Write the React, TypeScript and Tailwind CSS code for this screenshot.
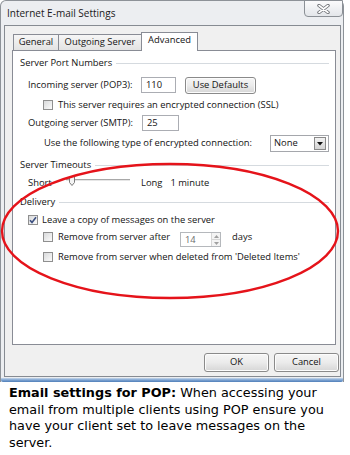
import React from "react";

const Checkbox = ({ checked = false }: { checked?: boolean }) => (
    <div className="w-[10px] h-[10px] shrink-0 border border-[#8f8f8f] bg-linear-to-br from-[#d9dadb] to-[#fbfbfb] flex items-center justify-center">
        {checked && (
            <svg width="8" height="8" viewBox="0 0 8 8">
                <path d="M1 4.2 L3 6.4 L7 1.2" fill="none" stroke="#3b4f80" strokeWidth="1.6" />
            </svg>
        )}
    </div>
);

const GroupHeader = ({ label }: { label: string }) => (
    <div className="flex items-center h-[12px] gap-[4px]">
        <span className="leading-[12px] whitespace-nowrap">{label}</span>
        <div className="flex-1 h-px bg-[#d5dadf]" />
    </div>
);

const WinButton = ({ label, className = "" }: { label: string; className?: string }) => (
    <div
        className={
            "flex items-center justify-center border border-[#8a8a8a] rounded-[3px] bg-linear-to-b from-[#f6f6f6] via-[#ebebeb] to-[#d6d6d6] shadow-[inset_0_0_0_1px_#fcfcfc] " +
            className
        }
    >
        {label}
    </div>
);

export default function App() {
    const tabs = [
        { name: "General", w: "w-[45px]", active: false },
        { name: "Outgoing Server", w: "w-[83px]", active: false },
        { name: "Advanced", w: "w-[57px]", active: true },
    ];

    return (
        <div className="relative w-[350px] h-[455px] bg-white overflow-hidden font-['Open_Sans',sans-serif] text-[9.4px] text-[#141414]">
            {/* Window */}
            <div className="w-[344px] h-[382px] flex flex-col border-x border-t border-[#8d9298] rounded-t-[6px] bg-[#eceef1]">
                {/* Title bar */}
                <div className="h-[24px] flex items-start justify-between pl-[6px]">
                    <span className="text-[10px] leading-[12px] mt-[6px] text-[#1a1a1a]">Internet E-mail Settings</span>
                    <div className="w-[39px] h-[17px] -mt-px border border-[#8b9096] rounded-b-[4px] bg-linear-to-b from-[#fbfbfc] to-[#e3e6ea] flex items-center justify-center">
                        <svg width="13" height="10" viewBox="0 0 13 10">
                            <path d="M2 1.5 L11 8.5 M11 1.5 L2 8.5" stroke="#6b6e73" strokeWidth="3.4" strokeLinecap="round" />
                            <path d="M2 1.5 L11 8.5 M11 1.5 L2 8.5" stroke="#ffffff" strokeWidth="1.6" strokeLinecap="round" />
                        </svg>
                    </div>
                </div>

                {/* Client area */}
                <div className="flex-1 ml-[3px] mr-[2px] border border-[#868b92] bg-[#f0f0f0] flex flex-col pt-[6px] pl-[7px] pr-[4px]">
                    {/* Tabs */}
                    <div className="h-[18px] flex items-end pl-px">
                        {tabs.map((t) => (
                            <div
                                key={t.name}
                                className={
                                    t.active
                                        ? "w-[57px] h-[19px] -mb-px relative z-10 bg-white border-x border-t border-[#898c95] flex items-center justify-center pb-[3px]"
                                        : t.w +
                                          " h-[16px] border-t border-l border-[#898c95] bg-linear-to-b from-[#f6f6f6] to-[#e3e3e3] flex items-center justify-center"
                                }
                            >
                                {t.name}
                            </div>
                        ))}
                    </div>

                    {/* Panel */}
                    <div className="h-[295px] bg-white border border-[#898c95] pt-[6px] pl-[7px] pr-[6px] flex flex-col">
                        <GroupHeader label="Server Port Numbers" />

                        <div className="flex items-start h-[17px] mt-[8px] ml-[8px]">
                            <span className="w-[113px] leading-[16px]">Incoming server (POP3):</span>
                            <div className="w-[35px] h-[16px] border border-[#abadb3] bg-white pl-[4px] leading-[14px]">110</div>
                            <WinButton label="Use Defaults" className="ml-[9px] w-[71px] h-[17px]" />
                        </div>

                        <div className="flex items-center h-[14px] mt-[4px] ml-[23px] gap-[5px]">
                            <Checkbox />
                            <span>This server requires an encrypted connection (SSL)</span>
                        </div>

                        <div className="flex items-start h-[16px] mt-[3px] ml-[8px]">
                            <span className="w-[114px] leading-[16px]">Outgoing server (SMTP):</span>
                            <div className="w-[37px] h-[16px] border border-[#abadb3] bg-white pl-[4px] leading-[14px]">25</div>
                        </div>

                        <div className="flex items-center h-[17px] mt-[4px] ml-[24px]">
                            <span>Use the following type of encrypted connection:</span>
                            <div className="ml-auto w-[59px] h-[17px] border border-[#a5a7ac] bg-white flex items-center pl-[3px] pr-[2px]">
                                <span className="flex-1">None</span>
                                <div className="w-[12px] h-[13px] border border-[#8a8a8a] bg-linear-to-b from-[#f2f2f2] to-[#d4d4d4] flex items-center justify-center">
                                    <svg width="6" height="4" viewBox="0 0 6 4">
                                        <path d="M0 0 H6 L3 3.5 Z" fill="#111" />
                                    </svg>
                                </div>
                            </div>
                        </div>

                        <div className="mt-[7px]">
                            <GroupHeader label="Server Timeouts" />
                        </div>

                        <div className="flex items-center h-[12px] mt-[6px] ml-[8px]">
                            <span className="w-[36px]">Short</span>
                            <div className="relative w-[66px] h-[12px]">
                                <div className="absolute left-[2px] right-0 top-[2px] h-[2px] border-t border-[#a8a8a8] bg-[#e6e6e6]" />
                                <svg className="absolute left-[5px] top-[-1px]" width="6" height="10" viewBox="0 0 6 10">
                                    <path d="M0.5 0.5 H5.5 V6.5 L3 9.5 L0.5 6.5 Z" fill="#f4f4f4" stroke="#7a7a7a" strokeWidth="1" />
                                </svg>
                            </div>
                            <span className="ml-[11px]">Long</span>
                            <span className="ml-[8px]">1 minute</span>
                        </div>

                        <div className="mt-[7px]">
                            <GroupHeader label="Delivery" />
                        </div>

                        <div className="flex items-center h-[12px] mt-[6px] ml-[8px] gap-[4px]">
                            <Checkbox checked />
                            <span>Leave a copy of messages on the server</span>
                        </div>

                        <div className="flex items-start h-[16px] mt-[5px] ml-[23px]">
                            <div className="mt-px">
                                <Checkbox />
                            </div>
                            <span className="ml-[5px] w-[122px] leading-[12px]">Remove from server after</span>
                            <div className="mt-px w-[41px] h-[15px] border border-[#b5b8bc] bg-white flex">
                                <span className="flex-1 pl-[4px] leading-[13px] text-[#6d6d6d]">14</span>
                                <div className="w-[9px] flex flex-col border-l border-[#d6d6d6]">
                                    <div className="flex-1 flex items-center justify-center border-b border-[#d6d6d6] bg-[#f4f4f4]">
                                        <svg width="5" height="3" viewBox="0 0 5 3">
                                            <path d="M0 3 L2.5 0 L5 3 Z" fill="#a0a0a0" />
                                        </svg>
                                    </div>
                                    <div className="flex-1 flex items-center justify-center bg-[#f4f4f4]">
                                        <svg width="5" height="3" viewBox="0 0 5 3">
                                            <path d="M0 0 L5 0 L2.5 3 Z" fill="#a0a0a0" />
                                        </svg>
                                    </div>
                                </div>
                            </div>
                            <span className="ml-[11px] leading-[12px]">days</span>
                        </div>

                        <div className="flex items-start h-[12px] mt-[4px] ml-[23px]">
                            <div className="mt-px">
                                <Checkbox />
                            </div>
                            <span className="ml-[5px] leading-[12px]">Remove from server when deleted from 'Deleted Items'</span>
                        </div>
                    </div>

                    {/* Buttons */}
                    <div className="flex justify-end gap-[5px] mt-[8px] -mr-[3px]">
                        <WinButton label="OK" className="w-[65px] h-[19px]" />
                        <WinButton label="Cancel" className="w-[65px] h-[19px]" />
                    </div>
                </div>

                {/* Bottom frame edge */}
                <div className="h-[4px] mt-px rounded-b-[2px] bg-linear-to-b from-[#c8d8ea] via-[#7ea4d2] to-[#4f7fb8]" />
            </div>

            {/* Caption */}
            <p className="mt-[3px] pl-[9px] w-[345px] font-['DejaVu_Sans',sans-serif] text-[12.8px] leading-[16.5px] text-black">
                <span className="font-bold">Email settings for POP:</span> When accessing your email from multiple clients using POP ensure you have your client set to leave messages on the server.
            </p>

            {/* Red highlight */}
            <svg className="absolute left-0 top-0 pointer-events-none" width="350" height="455" viewBox="0 0 350 455">
                <ellipse cx="170" cy="231" rx="168" ry="67" fill="none" stroke="#e5131a" strokeWidth="2.4" />
            </svg>
        </div>
    );
}
